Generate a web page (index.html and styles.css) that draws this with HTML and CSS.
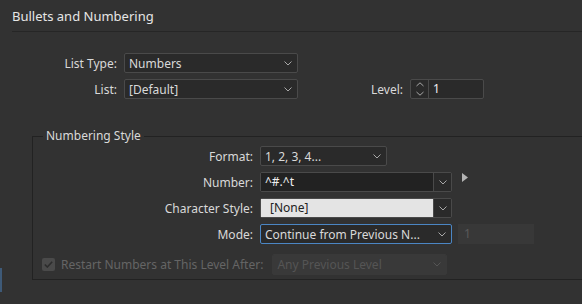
FILE: index.html
```html
<html>
<head><title>Bullets and Numbering</title>
<link rel="stylesheet" href="styles.css">
</head>
<body>
<div class="edge"></div>

<div class="title">Bullets and Numbering</div>

<div class="top">
  <div class="row">
    <span class="lab">List Type:</span>
    <div class="sel w174">Numbers <svg class="chev" width="8" height="5" viewBox="0 0 8 5"><path d="M0.5 0.5 L4 4 L7.5 0.5"/></svg></div>
  </div>
  <div class="row">
    <span class="lab">List:</span>
    <div class="sel w174">[Default] <svg class="chev" width="8" height="5" viewBox="0 0 8 5"><path d="M0.5 0.5 L4 4 L7.5 0.5"/></svg></div>
    <span class="lvl">Level:</span>
    <div class="spin">
      <div class="arrows">
        <svg width="8" height="14" viewBox="0 0 8 14"><path d="M0.5 4 L4 0.8 L7.5 4"/><path d="M0.5 10 L4 13.2 L7.5 10"/></svg>
      </div>
      <span class="val">1</span>
    </div>
  </div>
</div>

<fieldset class="grp">
  <legend>Numbering Style</legend>
  <div class="row">
    <span class="lab2">Format:</span>
    <div class="sel w127">1, 2, 3, 4... <svg class="chev" width="8" height="5" viewBox="0 0 8 5"><path d="M0.5 0.5 L4 4 L7.5 0.5"/></svg></div>
  </div>
  <div class="row">
    <span class="lab2">Number:</span>
    <div class="combo">
      <span class="field">^#.^t</span>
      <span class="btn"><svg class="chevb" width="8" height="5" viewBox="0 0 8 5"><path d="M0.5 0.5 L4 4 L7.5 0.5"/></svg></span>
    </div>
    <svg class="tri" width="6" height="9" viewBox="0 0 6 9"><path d="M0 0 L6 4.5 L0 9 Z"/></svg>
  </div>
  <div class="row">
    <span class="lab2">Character Style:</span>
    <div class="combo">
      <span class="field light">[None]</span>
      <span class="btn"><svg class="chevb" width="8" height="5" viewBox="0 0 8 5"><path d="M0.5 0.5 L4 4 L7.5 0.5"/></svg></span>
    </div>
  </div>
  <div class="row">
    <span class="lab2">Mode:</span>
    <div class="sel w192 focus">Continue from Previous N... <svg class="chev" width="8" height="5" viewBox="0 0 8 5"><path d="M0.5 0.5 L4 4 L7.5 0.5"/></svg></div>
    <span class="dis">1</span>
  </div>
  <div class="row chkrow">
    <span class="chk"><svg width="9" height="7" viewBox="0 0 9 7"><path d="M0.8 3.5 L3.3 6 L8.2 0.8"/></svg></span>
    <span class="dimtxt">Restart Numbers at This Level After:</span>
    <div class="sel dsel">Any Previous Level <svg class="chev" width="8" height="5" viewBox="0 0 8 5"><path d="M0.5 0.5 L4 4 L7.5 0.5"/></svg></div>
  </div>
</fieldset>

</body>
</html>
```

FILE: styles.css
```css
body {margin:0; background:#323232; color:#d9d9d9; font-family:"Noto Sans","Open Sans",sans-serif; font-size:12px; overflow:hidden; position:relative; height:304px;}
.edge {position:absolute; left:0; top:268px; width:2px; height:24px; background:#3e5a78;}

.title {margin-left:12px; padding-top:6px; height:25px; line-height:20px; font-size:13px; color:#e6e6e6; border-bottom:1px solid #262626;}

.top {margin-top:21px;}
.row {display:flex; align-items:center; height:20px; margin-bottom:6px;}
.lab {width:117px; text-align:right; margin-right:7px;}
.lab2 {width:220px; text-align:right; margin-right:7px;}

.sel {box-sizing:border-box; height:20px; border:1px solid #4a4a4a; border-radius:2px; background:#2a2a2a; padding-left:4px; display:flex; align-items:center; justify-content:space-between; padding-right:5px; white-space:nowrap;}
.w174 {width:174px;}
.w127 {width:127px;}
.w192 {width:192px;}
.focus {border-color:#4b86c4;}
.chev, .chevb {fill:none; stroke:#a8a8a8; stroke-width:1;}

.lvl {margin-left:73px; margin-right:7px;}
.spin {box-sizing:border-box; width:74px; height:20px; border:1px solid #4a4a4a; border-radius:2px; background:#2a2a2a; display:flex;}
.spin .arrows {width:17px; border-right:1px solid #4a4a4a; display:flex; align-items:center; justify-content:center;}
.spin .arrows svg {fill:none; stroke:#a8a8a8; stroke-width:1;}
.spin .val {padding-left:4px; line-height:18px; color:#f0f0f0;}

.grp {margin:29px -20px 0 32px; border:1px solid #222; border-right:none; padding:2px 0 4px 0; min-width:0;}
.grp legend {padding:0 3px; margin-left:10px; line-height:16px;}

.combo {box-sizing:border-box; width:192px; height:20px; border:1px solid #4a4a4a; border-radius:2px; display:flex;}
.combo .field {flex:1; background:#222; padding-left:4px; line-height:18px; color:#f0f0f0;}
.combo .field.light {background:#e4e4e4; color:#222; padding-left:9px;}
.combo .btn {width:17px; border-left:1px solid #4a4a4a; background:#2a2a2a; display:flex; align-items:center; justify-content:center;}
.tri {fill:#b4b4b4; margin-left:10px; margin-top:-9px;}

.dis {box-sizing:border-box; width:76px; height:20px; margin-left:6px; background:#383838; color:#5a5a5a; padding-left:6px; line-height:20px;}

.chkrow {margin-top:10px; margin-bottom:0; height:21px;}
.chk {width:13px; height:13px; margin-left:9px; background:#4a4a4a; border-radius:2px; display:flex; align-items:center; justify-content:center;}
.chk svg {fill:none; stroke:#2c2c2c; stroke-width:1.6;}
.dimtxt {color:#656565; margin-left:6px;}
.dsel {width:175px; height:21px; margin-left:9px; background:#393939; border-color:#393939; color:#555;}
.dsel .chev {stroke:#555;}
```
